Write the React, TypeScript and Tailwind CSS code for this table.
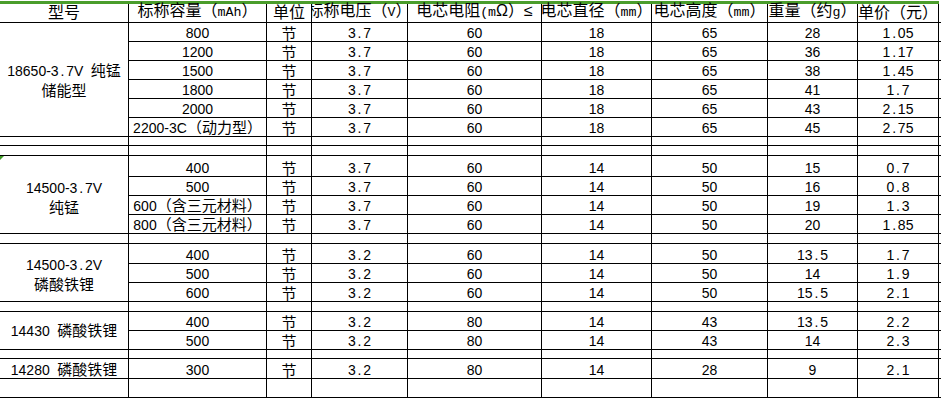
import type { ReactNode } from 'react';

// 电池价目表（Excel 截图样式）
type Group = {
  name: string[];
  pad: string;
  rows: string[][];
  gap: number;
  mark?: boolean;
};

const header = ['型号', '标称容量（mAh）', '单位', '标称电压（V）', '电芯电阻(mΩ）≤', '电芯直径（mm）', '电芯高度（mm）', '重量（约g）', '单价（元）'];

const groups: Group[] = [
  {
    name: ['18650-3.7V 纯锰', '储能型'],
    pad: 'pt-[2px]',
    gap: 2,
    rows: [
      ['800', '节', '3.7', '60', '18', '65', '28', '1.05'],
      ['1200', '节', '3.7', '60', '18', '65', '36', '1.17'],
      ['1500', '节', '3.7', '60', '18', '65', '38', '1.45'],
      ['1800', '节', '3.7', '60', '18', '65', '41', '1.7'],
      ['2000', '节', '3.7', '60', '18', '65', '43', '2.15'],
      ['2200-3C（动力型）', '节', '3.7', '60', '18', '65', '45', '2.75'],
    ],
  },
  {
    name: ['14500-3.7V', '纯锰'],
    pad: 'pt-[6px]',
    gap: 1,
    mark: true,
    rows: [
      ['400', '节', '3.7', '60', '14', '50', '15', '0.7'],
      ['500', '节', '3.7', '60', '14', '50', '16', '0.8'],
      ['600（含三元材料）', '节', '3.7', '60', '14', '50', '19', '1.3'],
      ['800（含三元材料）', '节', '3.7', '60', '14', '50', '20', '1.85'],
    ],
  },
  {
    name: ['14500-3.2V', '磷酸铁锂'],
    pad: 'pt-[3px]',
    gap: 1,
    rows: [
      ['400', '节', '3.2', '60', '14', '50', '13.5', '1.7'],
      ['500', '节', '3.2', '60', '14', '50', '14', '1.9'],
      ['600', '节', '3.2', '60', '14', '50', '15.5', '2.1'],
    ],
  },
  {
    name: ['14430 磷酸铁锂'],
    pad: 'pt-[1px]',
    gap: 1,
    rows: [
      ['400', '节', '3.2', '80', '14', '43', '13.5', '2.2'],
      ['500', '节', '3.2', '80', '14', '43', '14', '2.3'],
    ],
  },
];

function Txt({ s, head = false }: { s: string; head?: boolean }) {
  const runs: { t: string; a: boolean }[] = [];
  for (const ch of s) {
    const a = ch.charCodeAt(0) < 128;
    const last = runs[runs.length - 1];
    if (last && last.a === a) last.t += ch;
    else runs.push({ t: ch, a });
  }
  return (
    <span>
      {runs.map((r, i) => {
        if (!r.a) return <span key={i}>{r.t}</span>;
        if (head)
          return (
            <span key={i} className="font-['Liberation_Mono'] text-[13.3px]">
              {r.t}
            </span>
          );
        return (
          <span key={i} className="font-['Liberation_Sans'] text-[14px]">
            {[...r.t].map((c, j) =>
              c === '.' || c === ' ' ? (
                <span key={j} className="inline-block w-[7.5px] text-center">
                  {c}
                </span>
              ) : (
                <span key={j}>{c}</span>
              ),
            )}
          </span>
        );
      })}
    </span>
  );
}

function Cell({ v, last = false }: { v?: string; last?: boolean }) {
  return (
    <div
      className={`flex items-end justify-center overflow-x-clip whitespace-nowrap border-b border-black leading-[15px] ${
        last ? '' : 'border-r'
      }`}
    >
      {v ? <Txt s={v} /> : null}
    </div>
  );
}

function HeadCell({ v }: { v: string }) {
  return (
    <div className="flex items-end justify-center overflow-x-clip whitespace-nowrap border-b border-r border-black pb-px text-[16px] leading-[16px]">
      <Txt s={v} head />
    </div>
  );
}

function EmptyRow() {
  return (
    <>
      {Array.from({ length: 9 }).map((_, i) => (
        <Cell key={i} />
      ))}
      <Cell last />
    </>
  );
}

function DataCells({ row }: { row: string[] }) {
  return (
    <>
      {row.map((v, i) => (
        <Cell key={i} v={v} />
      ))}
      <Cell last />
    </>
  );
}

export default function App() {
  const items: ReactNode[] = [];

  header.forEach((h, i) => items.push(<HeadCell key={`h${i}`} v={h} />));
  items.push(<Cell key="h9" last />);

  groups.forEach((g, gi) => {
    const span = ['row-span-1', 'row-span-2', 'row-span-3', 'row-span-4', 'row-span-5', 'row-span-6'][g.rows.length - 1];
    items.push(
      <div
        key={`g${gi}`}
        className={`relative flex flex-col items-center justify-center overflow-x-clip whitespace-nowrap border-b border-r border-black leading-[19px] ${span} ${g.pad}`}
      >
        {g.mark && (
          <span className="absolute left-0 top-0 h-0 w-0 border-r-[4px] border-t-[4px] border-r-transparent border-t-[#3f9b27]" />
        )}
        {g.name.map((n) => (
          <div key={n}>
            <Txt s={n} />
          </div>
        ))}
      </div>,
    );
    g.rows.forEach((r, ri) => items.push(<DataCells key={`g${gi}r${ri}`} row={r} />));
    for (let k = 0; k < g.gap; k++) items.push(<EmptyRow key={`g${gi}e${k}`} />);
  });

  // 14280 单行
  items.push(<Cell key="l0" v="14280 磷酸铁锂" />);
  items.push(<DataCells key="l1" row={['300', '节', '3.2', '80', '14', '28', '9', '2.1']} />);
  items.push(<EmptyRow key="l2" />);

  return (
    <div className="flex h-[400px] w-[941px] flex-col overflow-hidden bg-white font-['Liberation_Sans','Noto_Sans_CJK_SC',sans-serif] text-[15px] text-black">
      <div className="mt-px h-[3px] w-[939px] shrink-0 bg-[#4a9d2b]" />
      <div className="grid grid-cols-[129px_138px_45px_96px_134px_110px_116px_90px_81px_2px] grid-rows-[19px_19px_19px_19px_19px_19px_19px_9px_10px_21px_19px_19px_19px_10px_20px_19px_19px_10px_19px_19px_9px_20px_19px]">
        {items}
      </div>
    </div>
  );
}
